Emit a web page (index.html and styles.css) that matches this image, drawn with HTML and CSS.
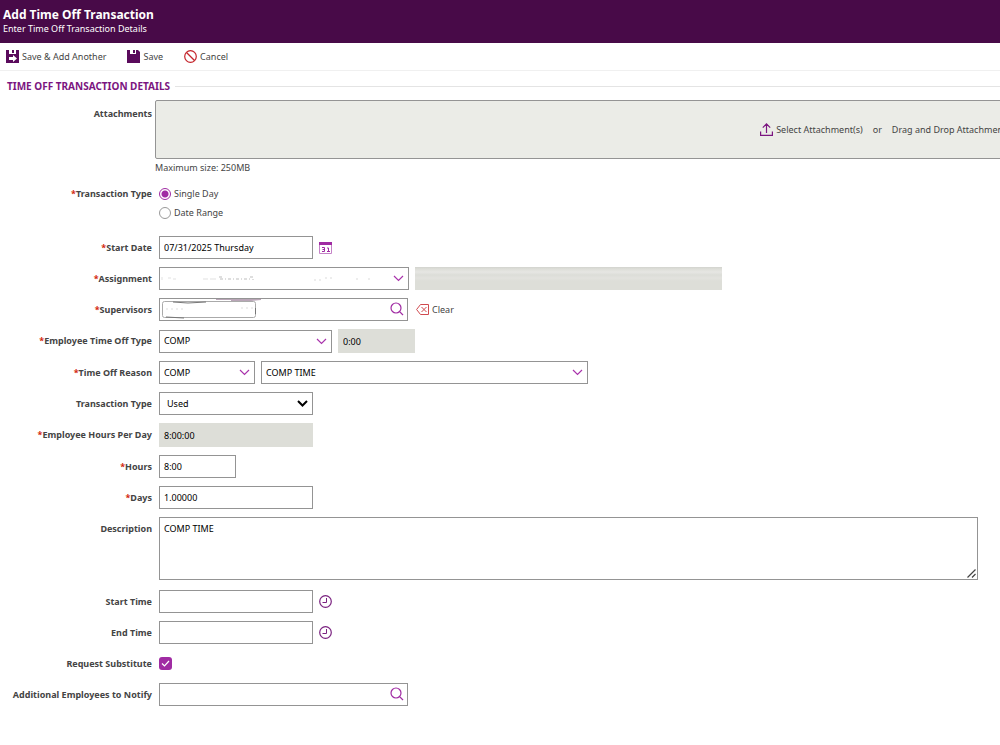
FILE: index.html
```html
<!DOCTYPE html>
<html lang="en">
<head>
    <meta charset="UTF-8">
    <meta name="viewport" content="width=device-width, initial-scale=1.0">
    <title>Add Time Off Transaction</title>
    <link rel="stylesheet" href="styles.css">
</head>
<body>
    <header class="page-header">
        <h1>Add Time Off Transaction</h1>
        <p>Enter Time Off Transaction Details</p>
    </header>

    <div class="toolbar">
        <button type="button" class="tool">
            <svg width="13" height="13" viewBox="0 0 13 13"><path fill="#5a0a5c" d="M0 0h13v13H0z"/><path fill="#fff" d="M3 0h7v4H3zM3 7h4V5l4 3.500-4 3.500v-2H3z"/><path fill="#5a0a5c" d="M6 0h2v3H6z"/></svg>
            Save &amp; Add Another
        </button>
        <button type="button" class="tool">
            <svg width="13" height="13" viewBox="0 0 13 13"><path fill="#5a0a5c" d="M0 0h11l2 2v11H0z"/><path fill="#fff" d="M3 0h6v4H3z"/><path fill="#5a0a5c" d="M6 0h2v3H6z"/></svg>
            Save
        </button>
        <button type="button" class="tool">
            <svg width="13" height="13" viewBox="0 0 13 13" fill="none" stroke="#c4242b" stroke-width="1.200"><circle cx="6.500" cy="6.500" r="5.800"/><path d="M2.500 2.500l8 8"/></svg>
            Cancel
        </button>
    </div>

    <form id="timeOffForm">
        <h2 class="section-title">TIME OFF TRANSACTION DETAILS</h2>

        <div class="row attach-row">
            <label for="attachButton">Attachments</label>
            <div class="attach">
                <div class="drop-zone">
                    <button type="button" id="attachButton" class="tool">
                        <svg width="13" height="13" viewBox="0 0 13 13" fill="none" stroke="#7b1580" stroke-width="1.200"><path d="M.6 8.500v3.900h11.800V8.500M6.500 10V1M2.800 4.600L6.500.9l3.700 3.700"/></svg>
                        Select Attachment(s)
                    </button>
                    <span>or</span>
                    <span>Drag and Drop Attachment(s)</span>
                </div>
                <p>Maximum size: 250MB</p>
            </div>
        </div>

        <div class="row radio-row" role="radiogroup" aria-labelledby="spanLabel">
            <span class="label required" id="spanLabel">Transaction Type</span>
            <div class="radios">
                <label><input type="radio" name="span" checked>Single Day</label>
                <label><input type="radio" name="span">Date Range</label>
            </div>
        </div>

        <div class="row">
            <label class="required" for="startDate">Start Date</label>
            <input type="text" id="startDate" class="medium" value="07/31/2025 Thursday">
            <button type="button" class="icon-button" aria-label="Pick a date">
                <svg width="13" height="13" viewBox="0 0 13 13"><path fill="none" stroke="#c583c7" d="M.5 3.500h12v9H.5z"/><path fill="#a02ba3" d="M0 1h13v3H0z"/><path fill="none" stroke="#a02ba3" d="M3 6.500h2.500v4H3M3.500 8.500h2M8 7h1.500v4M8 10.500h3"/></svg>
            </button>
        </div>

        <div class="row">
            <label class="required" for="assignment">Assignment</label>
            <div class="field assignment">
                <select id="assignment"></select>
                <svg class="smudge" width="220" height="10" viewBox="0 0 220 10" fill="none" stroke="#888"><path opacity=".25" d="M2 3v3M8 4h3M13 5h3M43 5h5M50 5h6"/><path opacity=".55" stroke-dasharray="3 2 1 2" d="M60 5h32M59 3h4M90 3h3v4"/><path opacity=".3" stroke-dasharray="2 3" d="M154 6h10M165 4h8M196 5h5M208 5h5"/></svg>
                <svg class="chevron" width="11" height="7" viewBox="0 0 11 7"><path d="M1 1l4.500 4.500L10 1"/></svg>
            </div>
            <div class="blank-name"></div>
        </div>

        <div class="row">
            <label class="required" for="supervisors">Supervisors</label>
            <div class="field lookup">
                <input type="text" id="supervisors">
                <svg class="chip" width="106" height="20" viewBox="0 0 106 20" fill="none"><rect x="1.500" y="2.500" width="93" height="16" rx="2" stroke="#aaa"/><path stroke="#777" d="M12 3l15 1 18-1M94.500 9v6M5 18l18 1"/><path stroke="#b9a6b7" d="M55 .5h45l-10 1H70"/><path stroke="#ddd" stroke-dasharray="2 3" d="M5 10h20M80 9h12"/></svg>
                <button type="button" class="search" aria-label="Search supervisors"><svg width="14" height="14" viewBox="0 0 14 14"><circle cx="6" cy="6" r="5"/><path d="M9.600 9.600L13 13"/></svg></button>
            </div>
            <button type="button" class="tool clear">
                <svg width="13" height="11" viewBox="0 0 13 11" fill="none" stroke="#d04a4f"><path d="M4.500 .5h8v10h-8L.6 5.500zM5.500 3l5 5M10.500 3l-5 5"/></svg>
                Clear
            </button>
        </div>

        <div class="row">
            <label class="required" for="timeOffType">Employee Time Off Type</label>
            <div class="field type">
                <select id="timeOffType"><option>COMP</option></select>
                <svg class="chevron" width="11" height="7" viewBox="0 0 11 7"><path d="M1 1l4.500 4.500L10 1"/></svg>
            </div>
            <input type="text" class="small tall" value="0:00" aria-label="Balance" readonly>
        </div>

        <div class="row">
            <label class="required" for="reason">Time Off Reason</label>
            <div class="field reason">
                <select id="reason"><option>COMP</option></select>
                <svg class="chevron" width="11" height="7" viewBox="0 0 11 7"><path d="M1 1l4.500 4.500L10 1"/></svg>
            </div>
            <div class="field reason-name">
                <select aria-label="Reason description"><option>COMP TIME</option></select>
                <svg class="chevron" width="11" height="7" viewBox="0 0 11 7"><path d="M1 1l4.500 4.500L10 1"/></svg>
            </div>
        </div>

        <div class="row">
            <label for="transactionType">Transaction Type</label>
            <div class="field medium plain">
                <select id="transactionType"><option>Used</option></select>
                <svg class="chevron" width="11" height="7" viewBox="0 0 11 7"><path d="M1 1l4.500 4.500L10 1"/></svg>
            </div>
        </div>

        <div class="row">
            <label class="required" for="hoursPerDay">Employee Hours Per Day</label>
            <input type="text" id="hoursPerDay" class="medium tall" value="8:00:00" readonly>
        </div>

        <div class="row">
            <label class="required" for="hours">Hours</label>
            <input type="text" id="hours" class="small" value="8:00">
        </div>

        <div class="row">
            <label class="required" for="days">Days</label>
            <input type="text" id="days" class="medium" value="1.00000">
        </div>

        <div class="row description-row">
            <label for="description">Description</label>
            <div class="field description">
                <textarea id="description">COMP TIME</textarea>
                <svg class="grip" width="9" height="9" viewBox="0 0 9 9"><path d="M.5 8.500l8-8M5 8.500L8.500 5"/></svg>
            </div>
        </div>

        <div class="row">
            <label for="startTime">Start Time</label>
            <input type="text" id="startTime" class="medium">
            <button type="button" class="icon-button" aria-label="Pick start time">
                <svg width="13" height="13" viewBox="0 0 13 13" fill="none" stroke="#7b2380"><circle cx="6.500" cy="6.500" r="5.800" stroke-width="1.200"/><path d="M7.500 3v4.500H3.500"/></svg>
            </button>
        </div>

        <div class="row">
            <label for="endTime">End Time</label>
            <input type="text" id="endTime" class="medium">
            <button type="button" class="icon-button" aria-label="Pick end time">
                <svg width="13" height="13" viewBox="0 0 13 13" fill="none" stroke="#7b2380"><circle cx="6.500" cy="6.500" r="5.800" stroke-width="1.200"/><path d="M7.500 3v4.500H3.500"/></svg>
            </button>
        </div>

        <div class="row">
            <label for="substitute">Request Substitute</label>
            <div class="check">
                <input type="checkbox" id="substitute" checked>
                <svg width="9" height="7" viewBox="0 0 9 7"><path d="M1 3.500L3.500 6 8 1"/></svg>
            </div>
        </div>

        <div class="row">
            <label for="notify">Additional Employees to Notify</label>
            <div class="field lookup">
                <input type="text" id="notify">
                <button type="button" class="search" aria-label="Search employees"><svg width="14" height="14" viewBox="0 0 14 14"><circle cx="6" cy="6" r="5"/><path d="M9.600 9.600L13 13"/></svg></button>
            </div>
        </div>
    </form>
</body>
</html>
```
FILE: styles.css
```css
* {
    box-sizing: border-box;
}
body {
    font-family: "Noto Sans", "Open Sans", sans-serif;
    font-size: 9px;
    line-height: 12px;
    margin: 0;
    color: #444;
    background: #fff;
    overflow-x: hidden;
}
h1, h2, p {
    margin: 0;
}
svg {
    display: block;
    flex: none;
}
.page-header {
    height: 43px;
    padding: 7px 3px;
    background: #480a48;
    color: #fff;
}
.page-header h1 {
    font-size: 12px;
    line-height: 16px;
}
.toolbar {
    display: flex;
    gap: 21px;
    height: 28px;
    padding: 0 6px;
    border-bottom: 1px solid #f0f0f0;
}
button {
    font: inherit;
    color: inherit;
    background: none;
    border: none;
    padding: 0;
    cursor: pointer;
}
.tool {
    display: flex;
    align-items: center;
    gap: 3px;
    white-space: nowrap;
}
.section-title {
    display: flex;
    align-items: center;
    gap: 5px;
    margin: 7px 0 6px 7px;
    font-size: 10px;
    line-height: 16px;
    font-weight: bold;
    color: #7b1580;
}
.section-title::after {
    content: "";
    flex: 1;
    border-top: 1px solid #e4e4e4;
}
.row {
    display: flex;
    align-items: center;
    min-height: 23px;
    margin-bottom: 8px;
}
.row > label, .row > .label {
    flex: none;
    width: 152px;
    margin-right: 7px;
    font-weight: bold;
    text-align: right;
}
.required::before {
    content: "*";
    color: #d3260c;
}

/* attachments */
.attach-row {
    align-items: flex-start;
    margin-bottom: 10px;
}
.attach-row > label {
    margin-right: 3px;
    padding-top: 8px;
}
.attach {
    flex: 1;
    margin-right: -30px;
}
.drop-zone {
    display: flex;
    align-items: center;
    justify-content: flex-end;
    gap: 10px;
    height: 59px;
    padding-right: 13px;
    border: 1px solid #949494;
    border-radius: 2px;
    background: #ebece7;
    white-space: nowrap;
}
.attach p {
    margin-top: 3px;
}
.radio-row {
    align-items: flex-start;
    margin-bottom: 14px;
}
.radio-row > .label {
    padding-top: 4px;
}
.radios label {
    display: flex;
    align-items: center;
    gap: 3px;
    height: 19px;
}
input[type="radio"] {
    appearance: none;
    width: 12px;
    height: 12px;
    margin: 0;
    border: 1px solid #999;
    border-radius: 50%;
}
input[type="radio"]:checked {
    border-color: #a02ba3;
    background: radial-gradient(#a02ba3 0 3px, #fff 4px);
}

/* fields */
input[type="text"], select, textarea {
    display: block;
    height: 23px;
    margin: 0;
    padding: 0 4px;
    border: 1px solid #949494;
    border-radius: 0;
    background: #fff;
    color: #000;
    font: inherit;
}
select {
    appearance: none;
}
.field {
    position: relative;
    margin-right: 6px;
}
.field select, .field input, .field textarea {
    width: 100%;
}
input[type="text"].tall {
    height: 24px;
}
input[type="text"]:read-only {
    border-color: #ddded8;
    background: #ddded8;
}
.small {
    width: 77px;
}
.medium {
    width: 154px;
}
.assignment {
    width: 250px;
}
.lookup {
    width: 249px;
}
.type {
    width: 173px;
}
.reason {
    width: 96px;
}
.reason-name {
    width: 327px;
}
.chevron {
    position: absolute;
    right: 5px;
    top: 8px;
    fill: none;
    stroke: #a933ac;
    stroke-width: 1.2;
    pointer-events: none;
}
.plain select {
    padding-left: 7px;
}
.plain .chevron {
    stroke: #000;
    stroke-width: 2;
}
.smudge {
    position: absolute;
    left: 1px;
    top: 7px;
}
.chip {
    position: absolute;
    left: 2px;
    top: 1px;
}
.blank-name {
    width: 307px;
    height: 23px;
    background: linear-gradient(#d2d3cf, #ddded8 2px, #e6e6e3 5px, #dcddd8 8px, #e2e2de 11px, #ddded8 14px);
}
.search {
    position: absolute;
    right: 4px;
    top: 4px;
}
.search svg {
    fill: none;
    stroke: #a02ba3;
    stroke-width: 1.2;
}
.clear {
    margin-left: 2px;
}
.icon-button {
    margin-left: 6px;
}

.description-row {
    align-items: flex-start;
    margin-bottom: 10px;
}
.description-row > label {
    padding-top: 6px;
}
.description {
    flex: 1;
    margin-right: 22px;
}
textarea {
    height: 63px;
    padding: 5px 4px;
    resize: none;
}
.grip {
    position: absolute;
    right: 2px;
    bottom: 2px;
    stroke: #444;
    stroke-width: 1.2;
}
.check {
    position: relative;
}
.check input {
    display: block;
    appearance: none;
    width: 13px;
    height: 13px;
    margin: 0;
    border-radius: 3px;
    background: #a02ba3;
}
.check svg {
    position: absolute;
    left: 2px;
    top: 3px;
    fill: none;
    stroke: #fff;
    stroke-width: 1.2;
    pointer-events: none;
}
```
